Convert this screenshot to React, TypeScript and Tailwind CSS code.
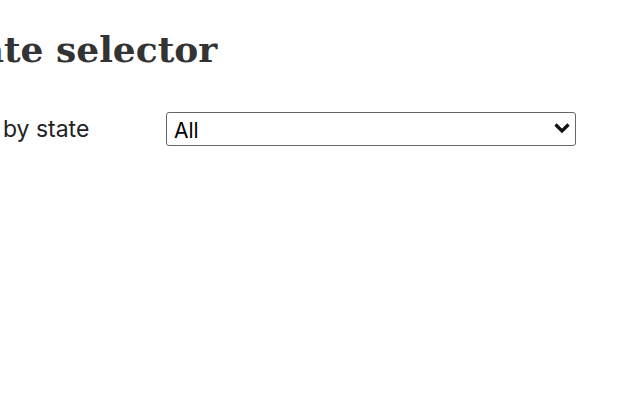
export default function App() {
  return (
    <div className="min-h-[400px] w-[640px] overflow-hidden bg-white text-[#222]">
      <div className="pt-[24px]">
        <h1 className="-ml-[62px] whitespace-nowrap font-['DejaVu_Serif',serif] text-[36px] font-bold leading-[50px] text-[#333]">
          State selector
        </h1>
        <div className="mt-[38px] flex items-center font-['Inter',sans-serif]">
          <label
            htmlFor="state"
            className="-ml-[58px] w-[224px] shrink-0 whitespace-nowrap text-[23px] leading-[34px]"
          >
            Filter by state
          </label>
          <div className="relative">
            <select
              id="state"
              className="h-[34px] w-[410px] appearance-none rounded-[3px] border border-[#666] bg-white pl-[7px] pr-[30px] pt-[2px] text-[21px] text-black"
              defaultValue="all"
            >
              <option value="all">All</option>
            </select>
            <svg
              className="pointer-events-none absolute right-[5px] top-[10px]"
              width="18"
              height="13"
              viewBox="0 0 18 13"
            >
              <path d="M2.5 2.5 L9 9 L15.5 2.5" fill="none" stroke="#111" strokeWidth="3.2" />
            </svg>
          </div>
        </div>
      </div>
    </div>
  );
}
